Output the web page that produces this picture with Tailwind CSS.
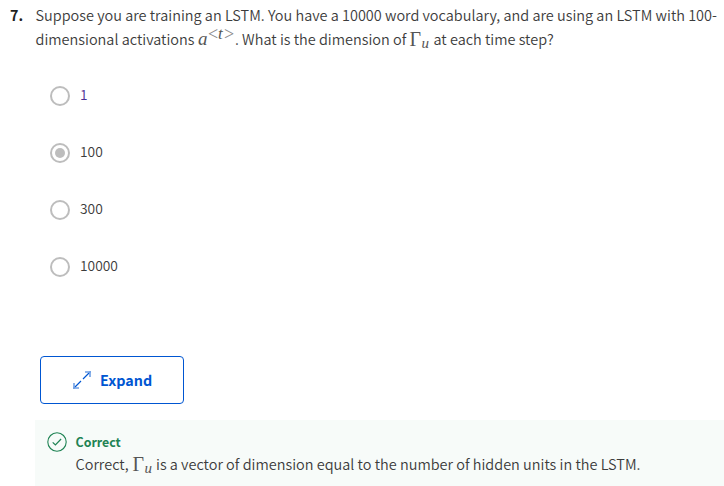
<!DOCTYPE html>
<html lang="en">
<head>
<meta charset="utf-8">
<title>Quiz</title>
<script src="https://cdn.jsdelivr.net/npm/@tailwindcss/browser@4"></script>
</head>
<body class="bg-white w-[724px] h-[486px] overflow-hidden text-[#3c3c3c] font-[350] font-['Noto_Sans_CJK_SC',sans-serif] text-[14.47px] leading-6">
<main class="flex flex-col h-[486px] pt-[3px]">
  <section class="flex h-12 whitespace-nowrap">
    <div class="w-[35.5px] pl-[10px] font-bold text-[14.35px] text-[#1f1f1f] shrink-0">7.</div>
    <div>
      <p class="h-6">Suppose you are training an LSTM. You have a 10000 word vocabulary, and are using an LSTM with 100-</p>
      <p class="flex h-6">
        <span class="w-[162.5px]">dimensional activations</span>
        <span class="w-[10px] font-['Liberation_Serif',serif] italic text-[19px] text-[#555]">a</span>
        <span class="w-[27px] flex font-['Liberation_Serif',serif] leading-[14px]"><span class="text-[#888] w-[10px] text-[18px]">&lt;</span><i class="w-[6px] text-[17px] text-[#555]">t</i><span class="text-[#888] text-[18px]">&gt;</span></span>
        <span class="w-[174.5px]">. What is the dimension of</span>
        <span class="w-[12px] font-['Liberation_Serif',serif] text-[20px] text-[#555]">Γ</span>
        <i class="w-[12px] font-['Liberation_Serif',serif] text-[15px] pt-[4px] text-[#555]">u</i>
        <span>at each time step?</span>
      </p>
    </div>
  </section>
  <ul class="flex flex-col gap-[37px] pt-[35px] pl-[50px]">
    <li class="flex h-5 items-center gap-[10px]"><span class="size-5 rounded-full border-2 border-[#bdbdbd]"></span><span class="text-[13.8px] pb-[4px] text-[#4b2e93]">1</span></li>
    <li class="flex h-5 items-center gap-[10px]"><span class="size-5 rounded-full border-2 border-[#bdbdbd] flex items-center justify-center"><span class="size-[10px] rounded-full bg-[#bdbdbd]"></span></span><span class="text-[13.8px] pb-[4px]">100</span></li>
    <li class="flex h-5 items-center gap-[10px]"><span class="size-5 rounded-full border-2 border-[#bdbdbd]"></span><span class="text-[13.8px] pb-[4px]">300</span></li>
    <li class="flex h-5 items-center gap-[10px]"><span class="size-5 rounded-full border-2 border-[#bdbdbd]"></span><span class="text-[13.8px] pb-[4px]">10000</span></li>
  </ul>
  <button class="mt-[79px] ml-10 w-36 h-12 shrink-0 flex items-center pl-8 gap-[9px] border border-[#0056d2] rounded-[4px] text-[#0056d2] font-bold text-[14.35px]">
    <svg class="size-[18px]" viewBox="0 0 18 18" fill="none" stroke="#0056d2"><path stroke-width="1.2" d="M.5 17.5 8 10M10 8 17.5.5"/><path stroke="#6f9fe4" stroke-width="1.6" d="M12 1h5v5M1 12v5h5"/></svg>
    <span>Expand</span>
  </button>
  <section class="mt-4 ml-[35px] flex-1 bg-[#f7fbf9] flex pl-3 whitespace-nowrap">
    <svg class="mt-3 size-5 shrink-0" viewBox="0 0 20 20" fill="none" stroke="#1f8354"><circle cx="10" cy="10" r="9.2" stroke-width="1.1"/><path d="m5.7 10.3 2.7 2.7 5.7-6" stroke-width="1.2"/></svg>
    <div class="pl-[8.5px] pt-[10px]">
      <h3 class="font-bold text-[12.4px] text-[#1f8354] leading-6 h-[22px]">Correct</h3>
      <p class="flex h-6"><span class="w-[57px]">Correct,</span><span class="w-[12px] font-['Liberation_Serif',serif] text-[20px] text-[#555]">Γ</span><i class="w-[11.5px] font-['Liberation_Serif',serif] text-[15px] pt-[4px] text-[#555]">u</i><span>is a vector of dimension equal to the number of hidden units in the LSTM.</span></p>
    </div>
  </section>
</main>
</body>
</html>
